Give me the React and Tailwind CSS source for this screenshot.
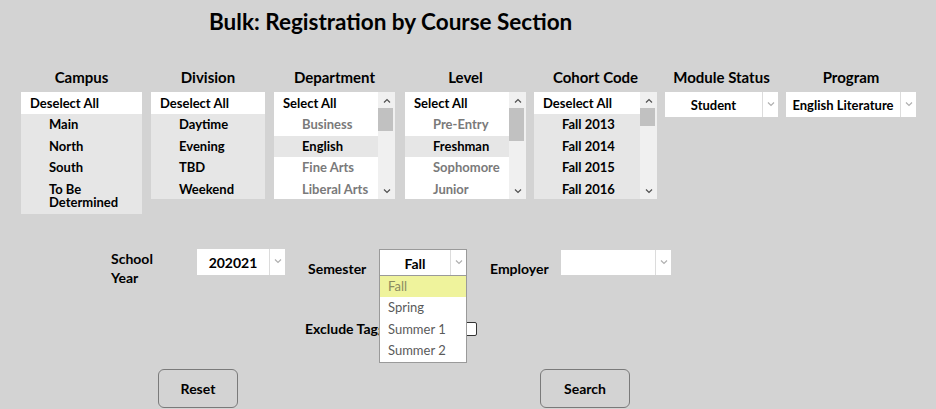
import { useState } from 'react';

const font = { fontFamily: 'Lato, "Noto Sans", sans-serif' };

function Chevron({ up = false, className = '' }) {
  return (
    <svg width="8" height="5" viewBox="0 0 8 5" className={className}>
      <polyline
        points={up ? '1,4.5 4,1.5 7,4.5' : '1,0.5 4,3.5 7,0.5'}
        fill="none"
        stroke="currentColor"
        strokeWidth="1.2"
      />
    </svg>
  );
}

function Scrollbar({ thumb }) {
  return (
    <div className="w-[17px] shrink-0 bg-[#f0f0f0] flex flex-col">
      <div className="h-[16px] flex items-center justify-center text-[#505050]">
        <Chevron up />
      </div>
      <div className={`w-[15px] bg-[#c1c1c1] ${thumb}`} />
      <div className="flex-1" />
      <div className="h-[16px] flex items-center justify-center text-[#505050]">
        <Chevron />
      </div>
    </div>
  );
}

// a multi-select list box like the ones in the filter row
function ListBox({ width, top, items, allOn, thumb, fixed = true }) {
  return (
    <div className={`${width} ${fixed ? 'h-[107px]' : ''} bg-white flex overflow-hidden`}>
      <div className="flex-1 flex flex-col">
        <div className="h-[22px] shrink-0 flex items-center pl-[9px] pt-[1px] bg-white text-black">{top}</div>
        {items.map((it) => {
          const on = allOn || it.on;
          return (
            <div
              key={it.label}
              className={`shrink-0 py-[4px] pl-[28px] pr-1 leading-[13.5px] ${on ? 'bg-[#e6e6e6] text-black' : 'bg-white text-[#7a7a7a]'}`}
            >
              {it.label}
            </div>
          );
        })}
        {allOn && <div className="flex-1 bg-[#e6e6e6]" />}
      </div>
      {thumb && <Scrollbar thumb={thumb} />}
    </div>
  );
}

function Select({ width, value, bordered = false, h = 'h-[26px]' }) {
  return (
    <div className={`${width} ${h} bg-white flex ${bordered ? 'border border-[#9a9a9a]' : ''}`}>
      <div className="flex-1 flex items-center justify-center pt-[2px] text-black">{value}</div>
      <div className="w-[16px] border-l border-[#dcdcdc] flex items-center justify-center text-[#b0b0b0]">
        <Chevron />
      </div>
    </div>
  );
}

function Column({ title, width, children, className = '' }) {
  return (
    <div className={`${width} shrink-0 flex flex-col ${className}`}>
      <div className="h-[24px] text-center text-[15px] leading-[18px] whitespace-nowrap text-black">{title}</div>
      {children}
    </div>
  );
}

export default function App() {
  const [semester] = useState('Fall');

  return (
    <div className="relative min-h-[409px] w-[936px] bg-[#d3d3d3] font-bold text-[13px] overflow-hidden" style={font}>
      {/* TITLE */}
      <h1 className="pt-[7px] pl-[209px] text-[22.5px] leading-[30px] font-bold text-black">
        Bulk: Registration by Course Section
      </h1>

      {/* FILTER LISTS */}
      <div className="mt-[31px] pl-[21px] flex items-start">
        <Column title="Campus" width="w-[121px]">
          <ListBox
            width="w-[121px]"
            fixed={false}
            top="Deselect All"
            allOn
            items={[{ label: 'Main' }, { label: 'North' }, { label: 'South' }, { label: 'To Be Determined' }]}
          />
        </Column>
        <Column title="Division" width="w-[114px]" className="ml-[9px]">
          <ListBox
            width="w-[114px]"
            top="Deselect All"
            allOn
            items={[{ label: 'Daytime' }, { label: 'Evening' }, { label: 'TBD' }, { label: 'Weekend' }]}
          />
        </Column>
        <Column title="Department" width="w-[121px]" className="ml-[9px]">
          <ListBox
            width="w-[121px]"
            top="Select All"
            thumb="h-[23px]"
            items={[
              { label: 'Business' },
              { label: 'English', on: true },
              { label: 'Fine Arts' },
              { label: 'Liberal Arts' },
            ]}
          />
        </Column>
        <Column title="Level" width="w-[121px]" className="ml-[10px]">
          <ListBox
            width="w-[121px]"
            top="Select All"
            thumb="h-[33px]"
            items={[
              { label: 'Pre-Entry' },
              { label: 'Freshman', on: true },
              { label: 'Sophomore' },
              { label: 'Junior' },
            ]}
          />
        </Column>
        <Column title="Cohort Code" width="w-[123px]" className="ml-[8px]">
          <ListBox
            width="w-[123px]"
            top="Deselect All"
            allOn
            thumb="h-[18px]"
            items={[
              { label: 'Fall 2013' },
              { label: 'Fall 2014' },
              { label: 'Fall 2015' },
              { label: 'Fall 2016' },
            ]}
          />
        </Column>
        <Column title="Module Status" width="w-[113px]" className="ml-[8px]">
          <Select width="w-[113px]" h="h-[25px]" value="Student" />
        </Column>
        <Column title="Program" width="w-[130px]" className="ml-[8px]">
          <Select width="w-[130px]" h="h-[25px]" value="English Literature" />
        </Column>
      </div>

      {/* YEAR / SEMESTER / EMPLOYER */}
      <div className="mt-[35px] pl-[111px] flex items-start text-[14px]">
        <div className="w-[86px] leading-[19px] text-black">
          School
          <br />
          Year
        </div>
        <Select width="w-[88px]" value="202021" />
        <div className="ml-[23px] w-[71px] pt-[10px] leading-[19px] text-black">Semester</div>
        <div className="relative z-10">
          <Select width="w-[88px]" h="h-[27px]" value={semester} bordered />
          <div className="absolute left-0 top-[27px] w-[88px] bg-white border border-[#9a9a9a] border-t-0 font-normal text-[13px] text-[#5a5a5a]">
            {['Fall', 'Spring', 'Summer 1', 'Summer 2'].map((s, i) => (
              <div
                key={s}
                className={`h-[21.5px] flex items-center pl-[8px] ${i === 0 ? 'bg-[#eff39c] text-[#8a8a60]' : ''}`}
              >
                {s}
              </div>
            ))}
          </div>
        </div>
        <div className="ml-[23px] w-[71px] pt-[10px] leading-[19px] text-black">Employer</div>
        <div className="mt-[1px]">
          <Select width="w-[110px]" h="h-[25px]" value="" />
        </div>
      </div>

      {/* EXCLUDE (label runs under the open semester menu) */}
      <div className="mt-[33px] pl-[305px] flex items-center text-[14px] leading-[18px]">
        <div className="w-[74px] whitespace-nowrap overflow-hidden text-black">Exclude Tagged</div>
        <div className="w-[84px]" />
        <div className="w-[14px] h-[14px] bg-white border border-[#333] rounded-[2px]" />
      </div>

      {/* BUTTONS */}
      <div className="mt-[31px] flex">
        <button className="ml-[158px] w-[80px] h-[39px] border border-[#7a7a7a] rounded-[6px] bg-[#d3d3d3] text-[14px] text-black">
          Reset
        </button>
        <button className="ml-[302px] w-[90px] h-[39px] border border-[#7a7a7a] rounded-[6px] bg-[#d3d3d3] text-[14px] text-black">
          Search
        </button>
      </div>
    </div>
  );
}
